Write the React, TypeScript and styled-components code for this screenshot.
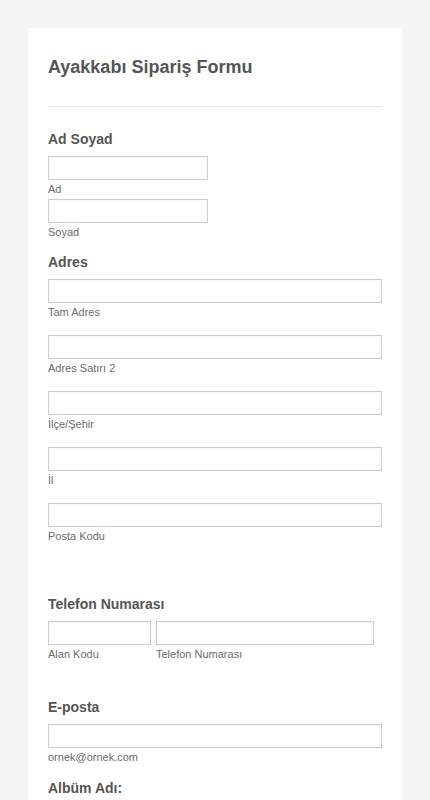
import React from 'react';
import styled, {createGlobalStyle} from 'styled-components';

const GlobalStyle = createGlobalStyle`
  html, body {
    margin: 0;
    padding: 0;
    background: #f4f4f4;
    font-family: "Liberation Sans", Arial, sans-serif;
  }
`;

const Page = styled.div`
  padding: 28px 28px 0;
`;

const Card = styled.form`
  background: #ffffff;
  padding: 0 20px 40px;
`;

const Header = styled.div`
  padding: 28px 0 28px;
  border-bottom: 1px solid #e3e3e3;
`;

const Title = styled.h1`
  margin: 0;
  font-size: 18px;
  line-height: 22px;
  font-weight: 700;
  color: #555555;
`;

const Field = styled.div<{gap: number}>`
  margin-top: ${({gap}) => gap}px;
`;

const Label = styled.div`
  font-size: 14px;
  line-height: 16px;
  font-weight: 700;
  color: #555555;
  margin-bottom: 9px;
`;

const Input = styled.input<{w?: number}>`
  display: block;
  box-sizing: border-box;
  width: ${({w}) => (w ? `${w}px` : '100%')};
  height: 24px;
  margin: 0;
  padding: 0 4px;
  border: 1px solid #cccccc;
  border-radius: 0;
  background: #ffffff;
  box-shadow: inset 0 1px 2px rgba(0, 0, 0, 0.04);
  font-family: inherit;
  font-size: 12px;
  outline: none;
`;

const SubLabel = styled.div`
  margin-top: 2px;
  font-size: 11px;
  line-height: 14px;
  color: #6b6b6b;
`;

const Stack = styled.div<{spacing: number}>`
  display: flex;
  flex-direction: column;
  gap: ${({spacing}) => spacing}px;
`;

const Row = styled.div`
  display: flex;
  gap: 5px;
`;

const addressParts = ['Tam Adres', 'Adres Satırı 2', 'İlçe/Şehir', 'İl', 'Posta Kodu'];

const App = () => (
  <>
    <GlobalStyle />
    <Page>
      <Card onSubmit={e => e.preventDefault()}>
        <Header>
          <Title>Ayakkabı Sipariş Formu</Title>
        </Header>

        <Field gap={24}>
          <Label>Ad Soyad</Label>
          <Stack spacing={3}>
            <div>
              <Input w={160} />
              <SubLabel>Ad</SubLabel>
            </div>
            <div>
              <Input w={160} />
              <SubLabel>Soyad</SubLabel>
            </div>
          </Stack>
        </Field>

        <Field gap={15}>
          <Label>Adres</Label>
          <Stack spacing={16}>
            {addressParts.map(part => (
              <div key={part}>
                <Input />
                <SubLabel>{part}</SubLabel>
              </div>
            ))}
          </Stack>
        </Field>

        <Field gap={53}>
          <Label>Telefon Numarası</Label>
          <Row>
            <div>
              <Input w={103} />
              <SubLabel>Alan Kodu</SubLabel>
            </div>
            <div>
              <Input w={218} />
              <SubLabel>Telefon Numarası</SubLabel>
            </div>
          </Row>
        </Field>

        <Field gap={38}>
          <Label>E-posta</Label>
          <Input />
          <SubLabel>ornek@ornek.com</SubLabel>
        </Field>

        <Field gap={16}>
          <Label>Albüm Adı:</Label>
          <Input />
        </Field>
      </Card>
    </Page>
  </>
);

export default App;
